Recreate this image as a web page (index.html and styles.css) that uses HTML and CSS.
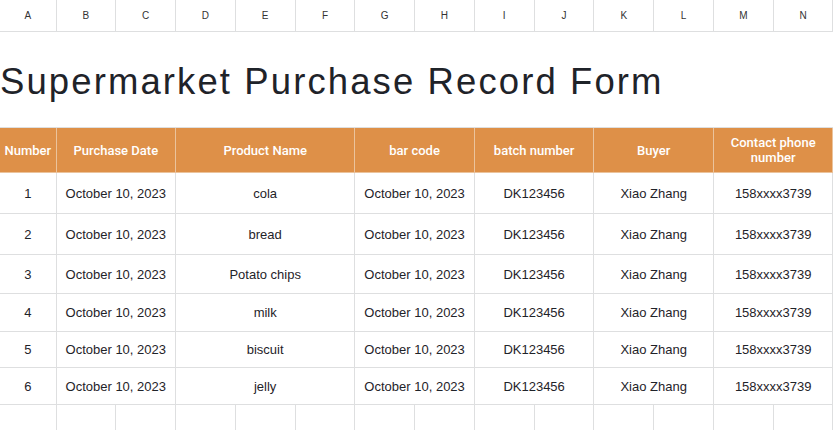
FILE: index.html
```html
<!DOCTYPE html>
<html lang="en">
<head>
  <meta charset="UTF-8">
  <title>Supermarket Purchase Record Form</title>
  <link rel="stylesheet" href="styles.css">
</head>
<body>

<table class="sheet">
  <colgroup>
    <col class="col-a">
    <col><col><col><col><col><col><col>
    <col><col><col><col><col><col>
  </colgroup>

  <!-- column letters -->
  <tr class="letters">
    <td>A</td><td>B</td><td>C</td><td>D</td><td>E</td><td>F</td><td>G</td>
    <td>H</td><td>I</td><td>J</td><td>K</td><td>L</td><td>M</td><td>N</td>
  </tr>

  <tr class="title-row">
    <td colspan="14"><h1>Supermarket Purchase Record Form</h1></td>
  </tr>

  <tr class="head">
    <td>Number</td>
    <td colspan="2">Purchase Date</td>
    <td colspan="3">Product Name</td>
    <td colspan="2">bar code</td>
    <td colspan="2">batch number</td>
    <td colspan="2">Buyer</td>
    <td colspan="2">Contact phone number</td>
  </tr>

  <tr class="r1">
    <td>1</td><td colspan="2">October 10, 2023</td><td colspan="3">cola</td>
    <td colspan="2">October 10, 2023</td><td colspan="2">DK123456</td>
    <td colspan="2">Xiao Zhang</td><td colspan="2">158xxxx3739</td>
  </tr>
  <tr class="r2">
    <td>2</td><td colspan="2">October 10, 2023</td><td colspan="3">bread</td>
    <td colspan="2">October 10, 2023</td><td colspan="2">DK123456</td>
    <td colspan="2">Xiao Zhang</td><td colspan="2">158xxxx3739</td>
  </tr>
  <tr class="r3">
    <td>3</td><td colspan="2">October 10, 2023</td><td colspan="3">Potato chips</td>
    <td colspan="2">October 10, 2023</td><td colspan="2">DK123456</td>
    <td colspan="2">Xiao Zhang</td><td colspan="2">158xxxx3739</td>
  </tr>
  <tr class="r4">
    <td>4</td><td colspan="2">October 10, 2023</td><td colspan="3">milk</td>
    <td colspan="2">October 10, 2023</td><td colspan="2">DK123456</td>
    <td colspan="2">Xiao Zhang</td><td colspan="2">158xxxx3739</td>
  </tr>
  <tr class="r5">
    <td>5</td><td colspan="2">October 10, 2023</td><td colspan="3">biscuit</td>
    <td colspan="2">October 10, 2023</td><td colspan="2">DK123456</td>
    <td colspan="2">Xiao Zhang</td><td colspan="2">158xxxx3739</td>
  </tr>
  <tr class="r6">
    <td>6</td><td colspan="2">October 10, 2023</td><td colspan="3">jelly</td>
    <td colspan="2">October 10, 2023</td><td colspan="2">DK123456</td>
    <td colspan="2">Xiao Zhang</td><td colspan="2">158xxxx3739</td>
  </tr>

  <tr class="empty">
    <td></td><td></td><td></td><td></td><td></td><td></td><td></td>
    <td></td><td></td><td></td><td></td><td></td><td></td><td></td>
  </tr>
</table>

</body>
</html>
```

FILE: styles.css
```css
body { margin: 0; font-family: "Liberation Sans", Arial, sans-serif; color: #1f2329; background: #fff; overflow: hidden; }
.sheet { border-collapse: collapse; table-layout: fixed; width: 833px; }
.sheet col { width: 59.78px; }
.sheet .col-a { width: 56px; }
.sheet td { border: 1px solid #dedfe0; text-align: center; font-size: 13px; padding: 0 2px; overflow: hidden; }
.sheet tr > td:first-child { border-left: none; }
.letters td { height: 31px; font-size: 10px; color: #333; border-top: none; }
.title-row td { height: 95px; text-align: left; padding: 0; border-left: none; border-right: none; }
.title-row h1 { margin: 0; padding-top: 4px; font-size: 36.5px; font-weight: normal; color: #1f2329; letter-spacing: 2.1px; }
.head td { background: #de9048; color: #fff; font-family: Roboto, "Liberation Sans", sans-serif; font-weight: 500; height: 44px; line-height: 15px; border-color: #ebc39c; }
.head td:last-child { padding: 0 8px; }
.r1 td { height: 40px; }
.r2 td { height: 40px; }
.r3 td { height: 38px; }
.r4 td { height: 37px; }
.r5 td { height: 35px; }
.r6 td { height: 36px; }
.empty td { height: 40px; }
```
